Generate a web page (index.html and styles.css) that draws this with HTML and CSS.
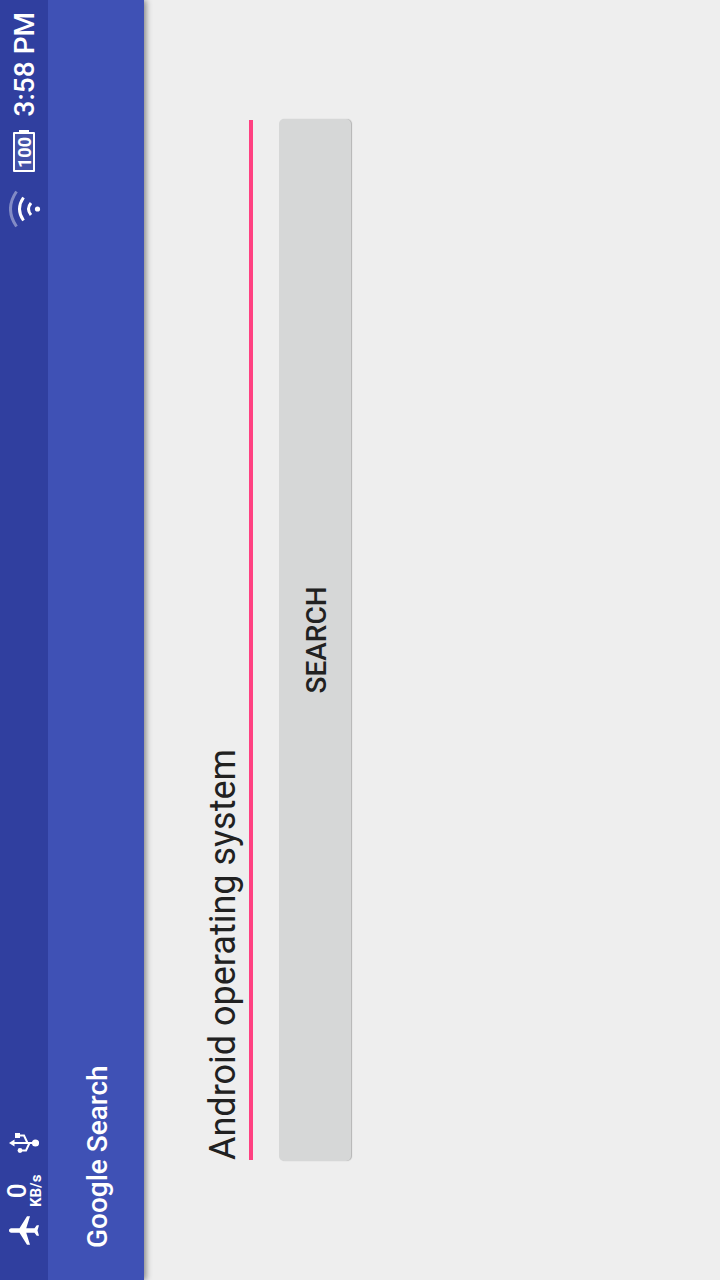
FILE: index.html
```html
<!DOCTYPE html>
<html lang="en">
<head>
<meta charset="utf-8">
<meta name="viewport" content="width=device-width, initial-scale=1">
<title>Google Search</title>
<link rel="stylesheet" href="styles.css">
</head>
<body>
<div class="device">
<div class="screen">
  <header class="status-bar">
    <div class="status-group status-left">
      <svg class="icon-plane" viewBox="2 2 19 20" aria-hidden="true"><path d="M21 16v-2l-8-5V3.500c0-.83-.67-1.500-1.500-1.500S10 2.670 10 3.500V9l-8 5v2l8-2.500V19l-2 1.500V22l3.500-1 3.500 1v-1.500L13 19v-5.500l8 2.500z"/></svg>
      <div class="net-speed">
        <span class="net-value">0</span>
        <span class="net-unit">KB/s</span>
      </div>
      <svg class="icon-usb" viewBox="0 0 20 30" aria-hidden="true">
        <path class="stroke" d="M10 3V26M17.500 10V15L10 18.500M2.500 11V17L10 20.500"/>
        <path d="M10 0L13.500 5.500H6.500Z"/>
        <rect x="15" y="6" width="5" height="5"/>
        <circle cx="2.500" cy="11" r="2.400"/>
        <circle cx="10" cy="26.500" r="3.600"/>
      </svg>
    </div>
    <div class="status-group status-right">
      <svg class="icon-wifi" viewBox="0 0 38 32" aria-hidden="true">
        <path class="arc faint" d="M1.500 7.500Q19 -4.500 36.500 7.500"/>
        <path class="arc" d="M7.500 14.500Q19 6.500 30.500 14.500"/>
        <path class="arc" d="M13 22Q19 17 25 22"/>
        <circle cx="19" cy="28.500" r="2.600"/>
      </svg>
      <div class="battery">100</div>
      <time class="clock">3:58 PM</time>
    </div>
  </header>
  <div class="app-bar">
    <h1 class="title">Google Search</h1>
  </div>
  <main>
    <form class="search-form">
      <input class="query" type="text" aria-label="Search query" value="Android operating system">
      <button class="search-button" type="button">SEARCH</button>
    </form>
  </main>
</div>
</div>
</body>
</html>
```
FILE: styles.css
```css
* {
  box-sizing: border-box;
}

body {
  margin: 0;
  background: #eeeeee;
  font-family: Roboto, "Liberation Sans", sans-serif;
}

.device {
  height: 100vh;
  overflow: hidden;
}

/* Landscape screen, turned a quarter to the left */
.screen {
  display: flex;
  flex-direction: column;
  width: 100vh;
  height: 100vw;
  transform-origin: top left;
  transform: translateY(100vh) rotate(-90deg);
  background: #eeeeee;
}

.status-bar {
  position: relative;
  z-index: 1;
  display: flex;
  justify-content: space-between;
  height: 48px;
  padding: 0 12px 0 35px;
  background: #303f9f;
  color: #ffffff;
}

.status-group {
  display: flex;
  align-items: center;
}

.status-bar svg {
  display: block;
  fill: #ffffff;
}

.icon-plane {
  width: 29px;
  height: 30px;
}

.net-speed {
  display: flex;
  flex-direction: column;
  align-items: center;
  margin: 0 22px 0 9px;
  font-weight: 500;
}

.net-value {
  font-size: 26px;
  line-height: 24px;
}

.net-unit {
  font-size: 15px;
  font-weight: 700;
  line-height: 14px;
}

.icon-usb {
  width: 20px;
  height: 30px;
}

.icon-usb .stroke {
  fill: none;
  stroke: #ffffff;
  stroke-width: 2;
}

.icon-wifi {
  width: 38px;
  height: 32px;
  margin: 2px 18px 0 0;
}

.icon-wifi .arc {
  fill: none;
  stroke: #ffffff;
  stroke-width: 3;
}

.icon-wifi .faint {
  opacity: 0.4;
}

.battery {
  position: relative;
  width: 40px;
  height: 22px;
  margin-right: 16px;
  border: 2px solid #ffffff;
  border-radius: 1px;
  background: #4552a8;
  font-size: 18px;
  font-weight: 700;
  line-height: 19px;
  text-align: center;
}

.battery::after {
  content: "";
  position: absolute;
  top: 4px;
  right: -4px;
  width: 2px;
  height: 10px;
  background: #ffffff;
}

.clock {
  font-size: 28px;
  font-weight: 500;
  line-height: 48px;
  padding-top: 2px;
}

.app-bar {
  display: flex;
  align-items: center;
  height: 96px;
  padding: 4px 32px 0;
  background: #3f51b5;
  color: #ffffff;
  box-shadow: 0 2px 6px rgba(0, 0, 0, 0.45);
}

.title {
  margin: 0;
  font-size: 28px;
  font-weight: 500;
  line-height: 32px;
}

.search-form {
  display: flex;
  flex-direction: column;
  gap: 26px;
  padding: 53px 119px;
}

.query {
  height: 56px;
  margin: 0 1px;
  padding: 0;
  border: 0;
  border-bottom: 4px solid #ff4081;
  outline: 0;
  background: transparent;
  color: #212121;
  font-family: inherit;
  font-size: 36px;
}

.search-button {
  height: 72px;
  padding: 2px 0 0;
  border: 0;
  border-radius: 5px;
  background: #d6d7d7;
  box-shadow: 0 1px 1px rgba(0, 0, 0, 0.25);
  color: #212121;
  font-family: inherit;
  font-size: 28px;
  font-weight: 500;
}
```
